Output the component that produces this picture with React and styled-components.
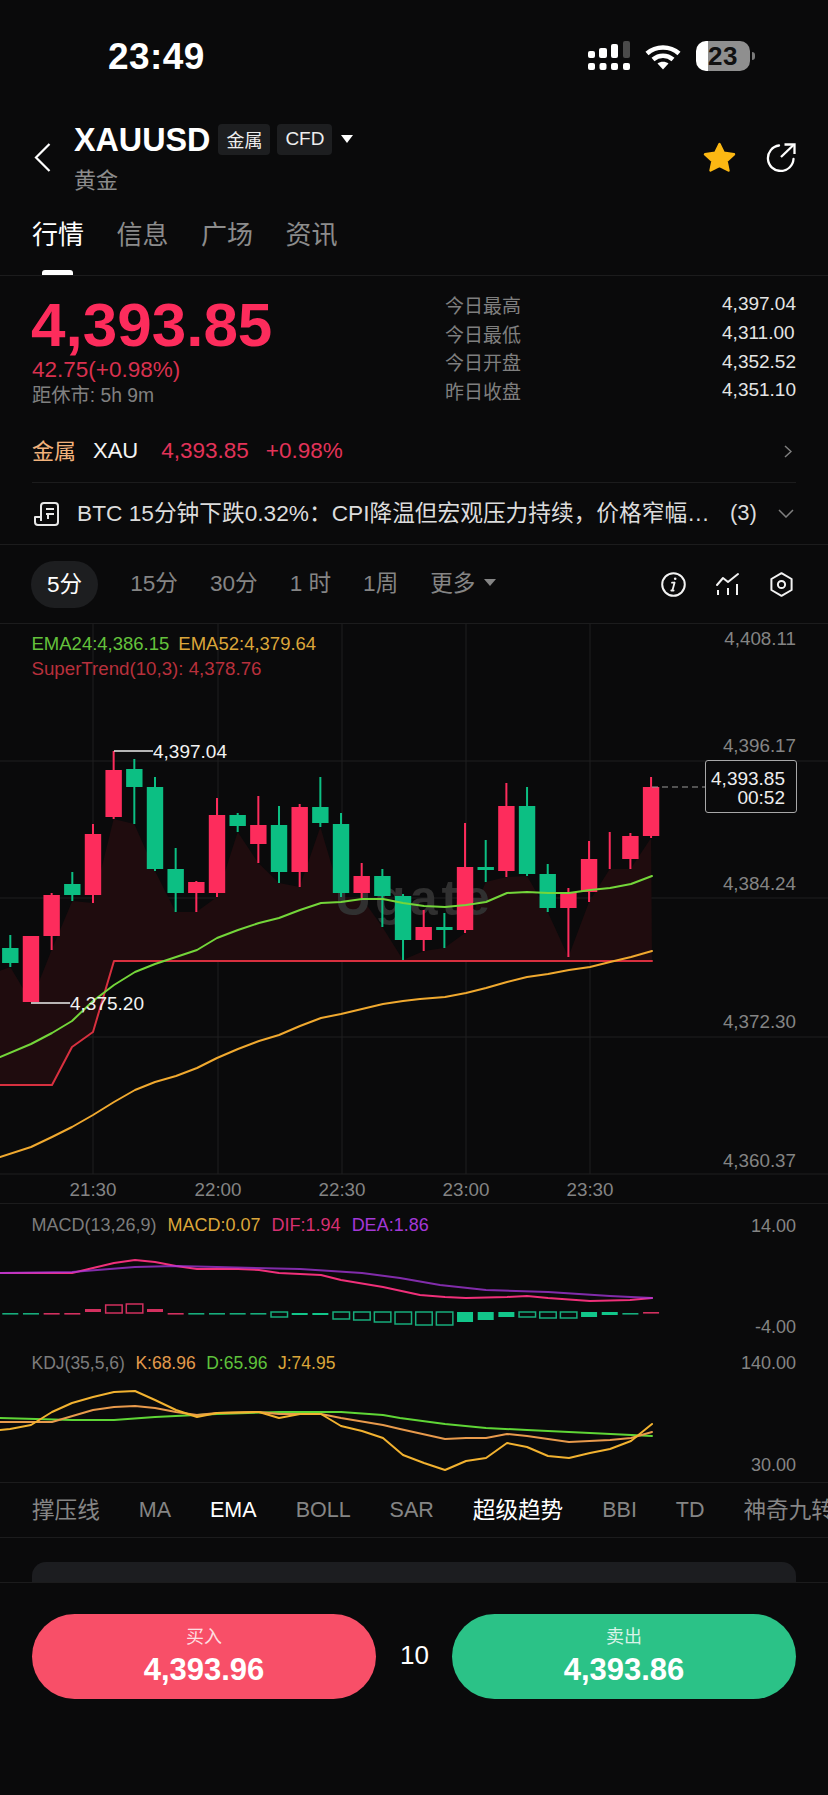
import React from 'react';
import styled, { createGlobalStyle } from 'styled-components';

const FONT = '"Liberation Sans", "Noto Sans CJK SC", sans-serif';
const RED = '#fd2c5c';
const GREEN = '#0cbf83';
const LINE = '#1c1c1d';

const GlobalStyle = createGlobalStyle`
  html, body {
    margin: 0;
    background: #0a0a0b;
  }
  #root {
    width: 828px;
    height: 1795px;
    overflow: hidden;
    font-family: ${FONT};
  }
`;

// wick top, body top, body bottom, wick bottom, direction
const CANDLES = [
  [935, 948, 963, 967, 'd'], [936, 936, 1002, 1002, 'u'], [893, 895, 936, 950, 'u'], [872, 884, 895, 901, 'd'],
  [824, 834, 895, 903, 'u'], [751, 770, 817, 819, 'u'], [759, 769, 787, 824, 'd'], [777, 787, 869, 871, 'd'],
  [848, 869, 893, 912, 'd'], [881, 882, 893, 912, 'u'], [798, 815, 893, 897, 'u'], [813, 815, 826, 832, 'd'],
  [796, 825, 844, 863, 'u'], [806, 825, 872, 883, 'd'], [804, 807, 872, 887, 'u'], [777, 807, 823, 827, 'd'],
  [813, 824, 893, 897, 'd'], [863, 876, 893, 898, 'u'], [869, 876, 896, 927, 'd'], [894, 896, 940, 960, 'd'],
  [910, 927, 940, 951, 'u'], [913, 927, 930, 948, 'd'], [823, 867, 930, 933, 'u'], [840, 867, 870, 882, 'd'],
  [783, 806, 871, 877, 'u'], [787, 806, 874, 876, 'd'], [864, 874, 908, 912, 'd'], [888, 892, 908, 957, 'u'],
  [841, 859, 892, 902, 'u'], [832, 850, 850, 869, 'u'], [833, 836, 859, 869, 'u'], [777, 787, 836, 838, 'u'],
];
const cx = (i) => 10.3 + 20.67 * i;

const EMA24 = '0,1057 31,1044 52,1033 72,1021 93,1001 114,985 135,972 155,964 176,957 197,950 217,938 238,930 259,923 279,918 300,910 321,903 341,902 362,899 383,899 403,903 424,906 445,907 466,905 486,902 507,893 527,892 548,893 569,893 590,890 610,888 631,884 652,876';
const EMA52 = '0,1157 31,1147 52,1137 72,1127 93,1115 114,1102 135,1090 155,1082 176,1076 197,1068 217,1058 238,1049 259,1041 279,1035 300,1026 321,1018 341,1014 362,1009 383,1004 403,1001 420,999 445,997 466,993 486,988 507,982 527,977 548,974 569,970 590,967 610,962 631,957 652,951';
const TREND = [[-12, 1085], [52, 1085], [72, 1047], [93, 1032], [114, 961], [652, 961]];

const DIF = '0,1273 72,1273 93,1268 114,1263 135,1260 155,1262 176,1266 197,1269 238,1269 259,1270 279,1273 321,1275 341,1280 383,1287 420,1295 445,1297 466,1298 507,1297 527,1296 548,1298 590,1301 630,1300 652,1298';
const DEA = '0,1273 72,1272 135,1267 176,1266 217,1267 300,1269 362,1273 400,1278 440,1285 486,1290 548,1292 610,1296 652,1298';

const KDJ_D = '0,1418 72,1420 114,1420 155,1417 217,1414 279,1412 341,1412 383,1415 400,1418 445,1424 486,1428 527,1430 590,1433 652,1436';
const KDJ_K = '0,1422 52,1422 93,1410 114,1407 135,1406 155,1408 176,1412 197,1415 217,1413 259,1412 279,1414 321,1414 341,1418 383,1425 400,1429 445,1439 466,1438 486,1438 507,1434 527,1436 548,1439 569,1442 610,1440 631,1438 652,1432';
const KDJ_J = '0,1430 10,1429 31,1425 52,1412 72,1403 93,1397 114,1392 135,1391 155,1400 176,1410 197,1417 217,1413 259,1412 279,1418 300,1414 321,1414 341,1426 362,1431 383,1438 403,1455 424,1463 445,1470 466,1461 486,1458 507,1443 527,1447 548,1456 569,1458 590,1453 610,1449 631,1441 652,1424';

// index in candle spacing: kind, colour, top, bottom
const HIST = [
  ['dash', 'd', 1313], ['dash', 'd', 1313], ['dash', 'u', 1313], ['dash', 'u', 1313],
  ['fill', 'u', 1309, 1312], ['box', 'u', 1305, 1313], ['box', 'u', 1304, 1313], ['fill', 'u', 1309, 1312],
  ['dash', 'u', 1313], ['dash', 'd', 1313], ['dash', 'd', 1313], ['dash', 'd', 1313],
  ['dash', 'd', 1313], ['box', 'd', 1312, 1317], ['fill', 'd', 1313, 1315], ['fill', 'd', 1313, 1315],
  ['box', 'd', 1312, 1319], ['box', 'd', 1312, 1320], ['box', 'd', 1312, 1322], ['box', 'd', 1312, 1324],
  ['box', 'd', 1312, 1325], ['box', 'd', 1312, 1325], ['fill', 'd', 1312, 1322], ['fill', 'd', 1312, 1320],
  ['fill', 'd', 1312, 1317], ['box', 'd', 1312, 1317], ['box', 'd', 1312, 1318], ['box', 'd', 1312, 1318],
  ['fill', 'd', 1312, 1317], ['fill', 'd', 1312, 1315], ['dash', 'd', 1313], ['dash', 'u', 1312],
];

const areaPoints = () => {
  const top = CANDLES.map((c, i) => `${cx(i)},${c[3]}`);
  const bottom = [...TREND].reverse().map((p) => p.join(','));
  return ['-12,975', ...top, ...bottom].join(' ');
};

const Page = styled.div`
  width: 828px;
  height: 1795px;
  background: #0a0a0b;
  display: flex;
  flex-direction: column;
  color: #fff;
`;

//#region status bar
const StatusBar = styled.div`
  height: 100px;
  flex: none;
  box-sizing: border-box;
  padding: 41px 73px 0 108px;
  display: flex;
  justify-content: space-between;
  align-items: flex-start;
`;

const Time = styled.div`
  font-size: 37px;
  font-weight: 700;
  line-height: 32px;
  letter-spacing: 0.4px;
`;

const StatusIcons = styled.div`
  display: flex;
  align-items: flex-start;
`;

const Signal = styled.svg`
  width: 42px;
  height: 29px;
`;

const Wifi = styled.svg`
  width: 36px;
  height: 26px;
  margin: 3px 15px 0 15px;
`;

const Battery = styled.div`
  position: relative;
  width: 54px;
  height: 30px;
  border-radius: 10px;
  overflow: visible;
  background: linear-gradient(to right, #fff 12px, #8f8f8f 12px);
  color: #111;
  font-size: 26px;
  font-weight: 700;
  line-height: 30px;
  letter-spacing: 0.6px;
  padding-left: 12px;
  box-sizing: border-box;
  margin-right: 5px;

  &::after {
    content: '';
    position: absolute;
    right: -5px;
    top: 11px;
    width: 3px;
    height: 8px;
    border-radius: 0 3px 3px 0;
    background: #7a7a7a;
  }
`;
//#endregion

//#region header
const Header = styled.div`
  height: 115px;
  flex: none;
  display: flex;
  align-items: flex-start;
  padding: 0 32px 0 34px;
  box-sizing: border-box;
`;

const BackIcon = styled.svg`
  width: 17px;
  height: 29px;
  margin-top: 43px;
`;

const TitleBlock = styled.div`
  margin-left: 23px;
  padding-top: 23px;
`;

const TitleRow = styled.div`
  display: flex;
  align-items: center;
  height: 31px;
`;

const Symbol = styled.div`
  font-size: 32.3px;
  font-weight: 700;
  line-height: 31px;
  margin-top: 3px;
  margin-right: 8px;
`;

const Tag = styled.span`
  height: 31px;
  display: flex;
  align-items: center;
  padding: 0 8px;
  margin: 1px 7px 0 0;
  background: #1d1e20;
  border-radius: 4px;
  color: #eee;
  font-size: ${(p) => p.$size || 18}px;
`;

const Caret = styled.span`
  width: 0;
  height: 0;
  margin-left: ${(p) => p.$gap || 2}px;
  margin-top: 1px;
  border-left: ${(p) => p.$size || 6.5}px solid transparent;
  border-right: ${(p) => p.$size || 6.5}px solid transparent;
  border-top: ${(p) => (p.$size || 6.5) * 1.3}px solid ${(p) => p.$color || '#fff'};
`;

const Subtitle = styled.div`
  margin-top: 13px;
  font-size: 22px;
  line-height: 28px;
  color: #8c8c8c;
`;

const HeaderActions = styled.div`
  margin-left: auto;
  padding-top: 42px;
  display: flex;
  gap: 30px;
`;

const ActionIcon = styled.svg`
  width: ${(p) => p.$w}px;
  height: 30px;
`;
//#endregion

//#region tabs
const TabBar = styled.div`
  height: 61px;
  flex: none;
  box-sizing: border-box;
  display: flex;
  gap: 32.5px;
  padding-left: 32px;
  border-bottom: 1px solid ${LINE};
`;

const Tab = styled.div`
  position: relative;
  font-size: 26px;
  line-height: 40px;
  color: ${(p) => (p.$active ? '#fff' : '#8c8c8c')};

  ${(p) => p.$active && `
    &::after {
      content: '';
      position: absolute;
      left: 10px;
      bottom: 0;
      width: 31px;
      height: 5px;
      border-radius: 3px 3px 0 0;
      background: #fff;
    }
  `}
`;
//#endregion

//#region quote
const Quote = styled.div`
  height: 144px;
  flex: none;
  box-sizing: border-box;
  padding: 0 32px;
  display: flex;
  justify-content: space-between;
`;

const PriceColumn = styled.div`
  padding-top: 19px;
`;

const BigPrice = styled.div`
  margin-left: -1px;
  font-size: 62px;
  font-weight: 700;
  line-height: 60px;
  color: ${RED};
`;

const Change = styled.div`
  margin-top: 3px;
  font-size: 22.5px;
  line-height: 24px;
  color: #d9314f;
`;

const CloseIn = styled.div`
  margin-top: 2px;
  font-size: 19.3px;
  line-height: 24px;
  color: #808080;
`;

const Stats = styled.div`
  width: 351px;
  padding-top: 14px;
  display: grid;
  grid-template-columns: 1fr auto;
  grid-auto-rows: 28.7px;
  align-items: center;
  font-size: 19px;
`;

const StatLabel = styled.div`
  color: #7f7f7f;
`;

const StatValue = styled.div`
  color: #e4e4e4;
`;
//#endregion

//#region sector and news rows
const SectorRow = styled.div`
  height: 63px;
  flex: none;
  box-sizing: border-box;
  margin: 0 32px;
  display: flex;
  align-items: center;
  border-bottom: 1px solid ${LINE};
  font-size: 22.5px;
`;

const SectorName = styled.span`
  color: #f2b27c;
  font-size: 22px;
  padding-bottom: 5px;
  margin-right: 17px;
`;

const SectorCode = styled.span`
  color: #f4f4f4;
  font-size: 22px;
  margin-right: 23px;
`;

const SectorFigure = styled.span`
  color: #e33359;
  margin-right: 17px;
`;

const SmallChevron = styled.svg`
  margin-left: auto;
  margin-right: 4px;
  width: 8px;
  height: 13px;
`;

const NewsRow = styled.div`
  height: 62px;
  flex: none;
  box-sizing: border-box;
  padding: 0 34px;
  display: flex;
  align-items: center;
  border-bottom: 1px solid ${LINE};
  color: #dcdcdc;
  font-size: 22.7px;
`;

const NewsIcon = styled.svg`
  width: 25px;
  height: 24px;
  flex: none;
  margin-right: 18px;
`;

const NewsText = styled.div`
  width: 640px;
  flex: none;
  padding-bottom: 4px;
  white-space: nowrap;
  overflow: hidden;
`;

const NewsCount = styled.div`
  margin-left: 13px;
  flex: none;
  padding-bottom: 2px;
  font-size: 22px;
`;

const NewsChevron = styled.svg`
  width: 16px;
  height: 9px;
  margin-left: auto;
  flex: none;
`;
//#endregion

//#region time frames
const FrameBar = styled.div`
  height: 79px;
  flex: none;
  box-sizing: border-box;
  padding: 0 34px 0 32px;
  display: flex;
  align-items: center;
  gap: 32px;
  border-bottom: 1px solid ${LINE};
  font-size: 22.6px;
`;

const Frame = styled.div`
  display: flex;
  align-items: center;
  padding-bottom: 5px;
  color: ${(p) => (p.$active ? '#fff' : '#858585')};
  ${(p) => p.$active && `
    height: 47px;
    box-sizing: border-box;
    padding: 0 16px 4px;
    margin-left: -1px;
    border-radius: 24px;
    background: #1d1e20;
  `}
`;

const FrameTools = styled.div`
  margin-left: auto;
  display: flex;
  align-items: center;
  gap: 29px;
`;

const ToolIcon = styled.svg`
  width: 25px;
  height: 25px;
`;
//#endregion

//#region chart panels
const Panel = styled.div`
  position: relative;
  height: ${(p) => p.$h}px;
  flex: none;
  box-sizing: border-box;
  border-bottom: ${(p) => (p.$open ? 'none' : `1px solid ${LINE}`)};
`;

const ChartSvg = styled.svg`
  display: block;
  width: 828px;
  height: 100%;
`;

const Legend = styled.div`
  position: absolute;
  left: 31.5px;
  top: ${(p) => p.$top}px;
  display: flex;
  gap: ${(p) => p.$gap || 11}px;
  font-size: ${(p) => p.$size || 18}px;
  line-height: 25px;
  white-space: nowrap;
`;

const LegendItem = styled.span`
  color: ${(p) => p.$color};
`;

const AxisText = styled.text`
  font-family: ${FONT};
  font-size: ${(p) => p.$size || 18}px;
  fill: #848484;
`;

const MarkText = styled.text`
  font-family: ${FONT};
  font-size: 19px;
  fill: #f2f2f2;
`;

const Watermark = styled.text`
  font-family: ${FONT};
  font-size: 50px;
  font-weight: 700;
  letter-spacing: 4px;
  fill: #303030;
`;

const PriceTag = styled.div`
  position: absolute;
  left: 705px;
  top: 136px;
  width: 92px;
  height: 53px;
  box-sizing: border-box;
  padding: 8px 11px 0 0;
  border: 1px solid #a8a8a8;
  border-radius: 3px;
  background: #0a0a0b;
  color: #eee;
  font-size: 19px;
  line-height: 19px;
  text-align: right;
`;
//#endregion

//#region indicators and footer
const IndicatorBar = styled.div`
  height: 55px;
  flex: none;
  box-sizing: border-box;
  padding-left: 32px;
  display: flex;
  align-items: center;
  gap: 39px;
  overflow: hidden;
  white-space: nowrap;
  border-bottom: 1px solid ${LINE};
  font-size: 21.5px;
`;

const Indicator = styled.span`
  color: ${(p) => (p.$active ? '#fff' : '#858585')};
  ${(p) => p.$cjk && `
    font-size: 22.6px;
    padding-bottom: 4px;
  `}
`;

const CardPeek = styled.div`
  height: 44px;
  flex: none;
  box-sizing: border-box;
  padding: 24px 32px 0;

  &::before {
    content: '';
    display: block;
    height: 20px;
    border-radius: 14px 14px 0 0;
    background: #1c1d20;
  }
`;

const Footer = styled.div`
  flex: 1;
  box-sizing: border-box;
  padding: 31px 32px 0;
  display: flex;
  align-items: flex-start;
  border-top: 1px solid ${LINE};
`;

const TradeButton = styled.div`
  width: 344px;
  height: 85px;
  box-sizing: border-box;
  padding-top: 12px;
  border-radius: 43px;
  background: ${(p) => p.$bg};
  display: flex;
  flex-direction: column;
  align-items: center;
`;

const TradeLabel = styled.div`
  font-size: 18px;
  line-height: 22px;
  color: rgba(255, 255, 255, 0.82);
`;

const TradePrice = styled.div`
  margin-top: 4px;
  font-size: 31px;
  font-weight: 700;
  line-height: 36px;
`;

const Quantity = styled.div`
  flex: 1;
  text-align: center;
  font-size: 26px;
  line-height: 85px;
  margin: -1px 0 0 1px;
`;
//#endregion

const histColor = (d) => (d === 'u' ? '#d2305f' : '#17ad7c');

const Candle = ({ data, i }) => {
  const [wickTop, bodyTop, bodyBottom, wickBottom, dir] = data;
  const color = dir === 'u' ? RED : GREEN;
  const x = cx(i);
  return (
    <g fill={color}>
      <rect x={x - 1} y={wickTop} width={2} height={wickBottom - wickTop} />
      {bodyBottom > bodyTop && <rect x={x - 8.2} y={bodyTop} width={16.4} height={bodyBottom - bodyTop} />}
    </g>
  );
};

const HistBar = ({ bar, i }) => {
  const [kind, dir, top, bottom] = bar;
  const x = cx(i) - 8;
  const color = histColor(dir);
  if (kind === 'dash') return <rect x={x} y={top} width={16} height={1.6} fill={color} />;
  if (kind === 'fill') return <rect x={x} y={top} width={16} height={bottom - top} fill={dir === 'u' ? color : '#12c68a'} />;
  return <rect x={x} y={top} width={16.5} height={bottom - top} fill="none" stroke={color} strokeWidth={1.5} />;
};

const Line = ({ points, color, width = 2, opacity }) => (
  <polyline points={points} fill="none" stroke={color} strokeWidth={width} strokeLinejoin="round" strokeLinecap="round" opacity={opacity} />
);

const Axis = ({ y, size, children }) => (
  <AxisText $size={size} x={796} y={y} textAnchor="end" dominantBaseline="central">{children}</AxisText>
);

const KlinePanel = () => (
  <Panel $h={580}>
    <ChartSvg viewBox="0 624 828 579" preserveAspectRatio="none">
      {[761, 898, 1037, 1174].map((y) => <line key={y} x1={0} x2={828} y1={y} y2={y} stroke="#1f1f20" />)}
      {[93, 218, 342, 466, 590].map((x) => <line key={x} x1={x} x2={x} y1={624} y2={1174} stroke="#1f1f20" />)}
      <polygon points={areaPoints()} fill="#1f0c0e" />
      <Watermark x={335} y={915}>Ugate</Watermark>
      {CANDLES.map((c, i) => <Candle key={i} data={c} i={i} />)}
      <Line points={TREND.map((p) => p.join(',')).join(' ')} color="#d8303f" />
      <Line points={EMA24} color="#74d63a" />
      <Line points={EMA52} color="#f0a92f" />
      <line x1={114} x2={153} y1={751} y2={751} stroke="#eee" strokeWidth={1.5} />
      <MarkText x={153} y={751} dominantBaseline="central">4,397.04</MarkText>
      <line x1={31} x2={70} y1={1003} y2={1003} stroke="#eee" strokeWidth={1.5} />
      <MarkText x={70} y={1003} dominantBaseline="central">4,375.20</MarkText>
      <line x1={652} x2={705} y1={787} y2={787} stroke="#999" strokeWidth={1.2} strokeDasharray="6 4" />
      <Axis size={18.8} y={638}>4,408.11</Axis>
      <Axis size={18.8} y={745}>4,396.17</Axis>
      <Axis size={18.8} y={883}>4,384.24</Axis>
      <Axis size={18.8} y={1021}>4,372.30</Axis>
      <Axis size={18.8} y={1160}>4,360.37</Axis>
      {[[93, '21:30'], [218, '22:00'], [342, '22:30'], [466, '23:00'], [590, '23:30']].map(([x, t]) => (
        <AxisText $size={18.8} key={t} x={x} y={1189} textAnchor="middle" dominantBaseline="central">{t}</AxisText>
      ))}
    </ChartSvg>
    <Legend $top={7} $size={18.5} $gap={9}>
      <LegendItem $color="#64c23c">EMA24:4,386.15</LegendItem>
      <LegendItem $color="#dba63a">EMA52:4,379.64</LegendItem>
    </Legend>
    <Legend $top={32} $size={18.7}>
      <LegendItem $color="#b8303c">SuperTrend(10,3): 4,378.76</LegendItem>
    </Legend>
    <PriceTag>4,393.85<br />00:52</PriceTag>
  </Panel>
);

const MacdPanel = () => (
  <Panel $h={139} $open>
    <ChartSvg viewBox="0 1204 828 139" preserveAspectRatio="none">
      {HIST.map((b, i) => <HistBar key={i} bar={b} i={i} />)}
      <Line points={DIF} color="#f0307a" />
      <Line points={DEA} color="#a938e0" opacity={0.75} />
      <Axis y={1226}>14.00</Axis>
      <Axis y={1327}>-4.00</Axis>
    </ChartSvg>
    <Legend $top={9}>
      <LegendItem $color="#7c7c7c">MACD(13,26,9)</LegendItem>
      <LegendItem $color="#dba63a">MACD:0.07</LegendItem>
      <LegendItem $color="#d63072">DIF:1.94</LegendItem>
      <LegendItem $color="#a438d8">DEA:1.86</LegendItem>
    </Legend>
  </Panel>
);

const KdjPanel = () => (
  <Panel $h={140}>
    <ChartSvg viewBox="0 1343 828 139" preserveAspectRatio="none">
      <Line points={KDJ_D} color="#5fd636" />
      <Line points={KDJ_K} color="#e89a4c" />
      <Line points={KDJ_J} color="#f2b230" />
      <Axis y={1363}>140.00</Axis>
      <Axis y={1465}>30.00</Axis>
    </ChartSvg>
    <Legend $top={8} $size={17.5} $gap={10.5}>
      <LegendItem $color="#7c7c7c">KDJ(35,5,6)</LegendItem>
      <LegendItem $color="#e29a4c">K:68.96</LegendItem>
      <LegendItem $color="#5fc23c">D:65.96</LegendItem>
      <LegendItem $color="#dba63a">J:74.95</LegendItem>
    </Legend>
  </Panel>
);

const SignalIcon = () => (
  <Signal viewBox="0 0 42 29">
    <rect x="0" y="10" width="7" height="7" rx="2" fill="#fff" />
    <rect x="11" y="7" width="8" height="10" rx="2" fill="#fff" />
    <rect x="23" y="3" width="7" height="14" rx="2" fill="#fff" />
    <rect x="35" y="0" width="7" height="17" rx="2" fill="#4a4a4a" />
    {[0, 11.5, 23, 35].map((x) => <rect key={x} x={x} y="22" width="7" height="7" rx="2" fill="#fff" />)}
  </Signal>
);

const WifiIcon = () => (
  <Wifi viewBox="0 0 36 26" fill="none" stroke="#fff" strokeWidth="4.6">
    <path d="M2 9.5 C11 1.5 25 1.5 34 9.5" />
    <path d="M8 15.5 C14 10.5 22 10.5 28 15.5" />
    <path d="M18 25.5 L12.5 19.5 C15.5 17 20.5 17 23.5 19.5 Z" fill="#fff" stroke="none" />
  </Wifi>
);

const App = () => (
  <Page>
    <GlobalStyle />
    <StatusBar>
      <Time>23:49</Time>
      <StatusIcons>
        <SignalIcon />
        <WifiIcon />
        <Battery>23</Battery>
      </StatusIcons>
    </StatusBar>

    <Header>
      <BackIcon viewBox="0 0 17 29" fill="none" stroke="#fff" strokeWidth="2.2">
        <polyline points="15.5,1 2,14.5 15.5,28" />
      </BackIcon>
      <TitleBlock>
        <TitleRow>
          <Symbol>XAUUSD</Symbol>
          <Tag>金属</Tag>
          <Tag $size={19}>CFD</Tag>
          <Caret />
        </TitleRow>
        <Subtitle>黄金</Subtitle>
      </TitleBlock>
      <HeaderActions>
        <ActionIcon $w={33} viewBox="0 0 33 30">
          <path d="M16.5 2 L20.8 10.8 L31 12.3 L23.6 19.2 L25.5 28.5 L16.5 24 L7.5 28.5 L9.4 19.2 L2 12.3 L12.2 10.8 Z" fill="#fcb813" stroke="#fcb813" strokeWidth="2.4" strokeLinejoin="round" />
        </ActionIcon>
        <ActionIcon $w={30} viewBox="0 0 30 30" fill="none" stroke="#fff" strokeWidth="2.3">
          <path d="M13 3.5 A12.8 12.8 0 1 0 27.5 17" strokeLinecap="round" />
          <path d="M15 15 L27.5 3" />
          <polyline points="18.5,2.5 28.5,2.5 28.5,12" />
        </ActionIcon>
      </HeaderActions>
    </Header>

    <TabBar>
      <Tab $active>行情</Tab>
      <Tab>信息</Tab>
      <Tab>广场</Tab>
      <Tab>资讯</Tab>
    </TabBar>

    <Quote>
      <PriceColumn>
        <BigPrice>4,393.85</BigPrice>
        <Change>42.75(+0.98%)</Change>
        <CloseIn>距休市: 5h 9m</CloseIn>
      </PriceColumn>
      <Stats>
        <StatLabel>今日最高</StatLabel><StatValue>4,397.04</StatValue>
        <StatLabel>今日最低</StatLabel><StatValue>4,311.00</StatValue>
        <StatLabel>今日开盘</StatLabel><StatValue>4,352.52</StatValue>
        <StatLabel>昨日收盘</StatLabel><StatValue>4,351.10</StatValue>
      </Stats>
    </Quote>

    <SectorRow>
      <SectorName>金属</SectorName>
      <SectorCode>XAU</SectorCode>
      <SectorFigure>4,393.85</SectorFigure>
      <SectorFigure>+0.98%</SectorFigure>
      <SmallChevron viewBox="0 0 8 13" fill="none" stroke="#808080" strokeWidth="1.5">
        <polyline points="1,1 7,6.5 1,12" />
      </SmallChevron>
    </SectorRow>

    <NewsRow>
      <NewsIcon viewBox="0 0 25 24" fill="none" stroke="#e8e8e8" strokeWidth="2" strokeLinejoin="round">
        <path d="M7 19 V4 a3 3 0 0 1 3-3 h11 a3 3 0 0 1 3 3 v16 a3 3 0 0 1-3 3 H4 a3 3 0 0 1-3-3 v-5 h5" />
        <path d="M12 7 h8 M12 12 h8 M14 12 v5" />
      </NewsIcon>
      <NewsText>BTC 15分钟下跌0.32%：CPI降温但宏观压力持续，价格窄幅…</NewsText>
      <NewsCount>(3)</NewsCount>
      <NewsChevron viewBox="0 0 16 9" fill="none" stroke="#808080" strokeWidth="1.5">
        <polyline points="1,1 8,8 15,1" />
      </NewsChevron>
    </NewsRow>

    <FrameBar>
      <Frame $active>5分</Frame>
      <Frame>15分</Frame>
      <Frame>30分</Frame>
      <Frame>1 时</Frame>
      <Frame>1周</Frame>
      <Frame>更多<Caret $gap={9} $size={6} $color="#858585" /></Frame>
      <FrameTools>
        <ToolIcon viewBox="0 0 25 25" fill="none" stroke="#f2f2f2" strokeWidth="2">
          <circle cx="12.5" cy="12.5" r="11.3" />
          <path d="M13.6 10.5 L11.4 18.5 M11 10.7 H13.6 M10.3 18.5 H12.6" strokeWidth="1.8" strokeLinecap="round" />
          <circle cx="14.2" cy="6.8" r="1.3" fill="#f2f2f2" stroke="none" />
        </ToolIcon>
        <ToolIcon viewBox="0 0 25 25" fill="none" stroke="#f2f2f2" strokeWidth="2">
          <polyline points="2,13 8,6 13,10 23,2" strokeLinecap="round" strokeLinejoin="round" />
          <path d="M3 18 V23 M13 16 V23 M22 12 V23" />
        </ToolIcon>
        <ToolIcon viewBox="0 0 25 25" fill="none" stroke="#f2f2f2" strokeWidth="2">
          <path d="M12.5 1.2 L22.6 7 V18 L12.5 23.8 L2.4 18 V7 Z" strokeLinejoin="round" />
          <circle cx="12.5" cy="12.5" r="3.6" />
        </ToolIcon>
      </FrameTools>
    </FrameBar>

    <KlinePanel />
    <MacdPanel />
    <KdjPanel />

    <IndicatorBar>
      <Indicator $cjk>撑压线</Indicator>
      <Indicator>MA</Indicator>
      <Indicator $active>EMA</Indicator>
      <Indicator>BOLL</Indicator>
      <Indicator>SAR</Indicator>
      <Indicator $active $cjk>超级趋势</Indicator>
      <Indicator>BBI</Indicator>
      <Indicator>TD</Indicator>
      <Indicator $cjk>神奇九转</Indicator>
    </IndicatorBar>

    <CardPeek />

    <Footer>
      <TradeButton $bg="#f84f68">
        <TradeLabel>买入</TradeLabel>
        <TradePrice>4,393.96</TradePrice>
      </TradeButton>
      <Quantity>10</Quantity>
      <TradeButton $bg="#2bc287">
        <TradeLabel>卖出</TradeLabel>
        <TradePrice>4,393.86</TradePrice>
      </TradeButton>
    </Footer>
  </Page>
);

export default App;
